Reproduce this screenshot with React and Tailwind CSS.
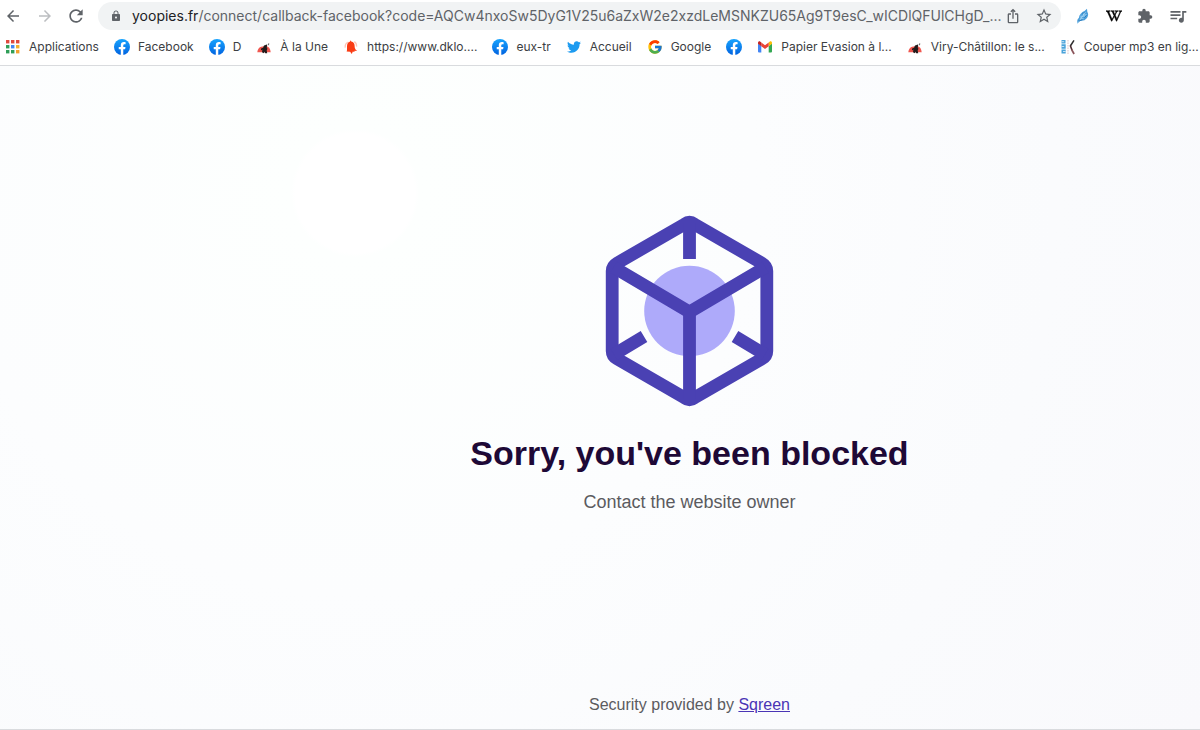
import React from "react";
import {
  MdArrowBack,
  MdArrowForward,
  MdRefresh,
  MdLock,
  MdExtension,
  MdStarBorder,
  MdOutlineIosShare,
  MdQueueMusic,
} from "react-icons/md";
import { FaTwitter, FaWikipediaW } from "react-icons/fa";
import { FcGoogle } from "react-icons/fc";

function AppsIcon() {
  const colors = [
    "#e04a3f", "#e04a3f", "#e04a3f",
    "#2f9e57", "#4285f4", "#f2b02e",
    "#2f9e57", "#2f9e57", "#f2a02e",
  ];
  return (
    <svg viewBox="0 0 16 16" className="size-4">
      {colors.map((c, i) => (
        <rect key={i} x={1 + (i % 3) * 5} y={1 + Math.floor(i / 3) * 5} width="3.4" height="3.4" fill={c} />
      ))}
    </svg>
  );
}

function FacebookIcon() {
  return (
    <svg viewBox="0 0 24 24" className="size-4">
      <defs>
        <linearGradient id="fb" x1="0" y1="0" x2="0" y2="1">
          <stop offset="0" stopColor="#18a4fe" />
          <stop offset="1" stopColor="#0163e0" />
        </linearGradient>
      </defs>
      <circle cx="12" cy="12" r="12" fill="url(#fb)" />
      <path
        fill="#fff"
        d="M16.7 15.5l.5-3.5h-3.3V9.7c0-1 .5-1.900 1.900-1.900h1.600V4.900s-1.400-.25-2.700-.25c-2.700 0-4.500 1.650-4.500 4.700V12H7.100v3.500h3.100V23.900a12.400 12.400 0 0 0 3.700 0V15.500z"
      />
    </svg>
  );
}

function NewsIcon() {
  return (
    <svg viewBox="0 0 16 16" className="size-4">
      <path d="M1.300 13.200c.3-2.600 1.500-4.800 3.700-5.400L10 7c3 .5 4.400 3 4.700 6.200z" fill="#f0574f" />
      <path d="M6 13.200l.4-2.800-1.500 1 .2-1.800 2-.8.9-2.200 1.700-.6.6-.8.9 1.300-.5 1.800.7 1.500-.7 1.700.5 2.700H9.200l-.6-1.700-.6 1.700z" fill="#1f1a1a" />
      <path d="M11.600 5.600l1.300-1.500.5 1-1 1.300z" fill="#6d6868" />
    </svg>
  );
}

function BellIcon() {
  return (
    <svg viewBox="0 0 16 16" className="size-4">
      <path d="M5.300 3C3 3.800 2 6 2.200 8.600M11.300 2.600c1.800 1 2.400 2.900 2.300 5" stroke="#ffc4b5" strokeWidth="1.300" fill="none" />
      <path
        d="M7.300 1.200l1 1.300c2.200.3 3.300 2 3.300 4.300 0 2.600.7 3.800 2.600 5.200l-2.600-.2-.3 1.200-1.500-.6-1 2.500-1.700-2.100-3.500-.2c.6-1.300.4-3 .4-5.200 0-2.400.9-4 3.100-4.800z"
        fill="#fa3c14"
      />
    </svg>
  );
}

function GmailIcon() {
  return (
    <svg viewBox="0 0 16 16" className="size-4">
      <path d="M1 4.500l3.300 2.400V13.500H2a1 1 0 0 1-1-1z" fill="#4285f4" />
      <path d="M15 4.500l-3.300 2.400v6.600H14a1 1 0 0 0 1-1z" fill="#34a853" />
      <path d="M11.700 3.600V7.300L15 4.800V3.900c0-1.300-1.400-2-2.400-1.200z" fill="#fbbc04" />
      <path d="M4.300 7.300V3.500L8 6.300l3.700-2.800v3.800L8 10z" fill="#ea4335" />
      <path d="M1 3.900v.9l3.300 2.500V3.500l-.9-.8C2.400 1.900 1 2.600 1 3.900z" fill="#c5221f" />
    </svg>
  );
}

function Mp3Icon() {
  return (
    <svg viewBox="0 0 16 16" className="size-4">
      <path d="M1.500 1h4v3.500h-4zM1.500 5.200h4.200v4.600H1.500zM1.500 10.600h4.200v4H1.500z" fill="#4aa3da" />
      <path d="M1.500 2.700h2.700M1.500 7.500h2.700M3 12.500h2.700" stroke="#e4f3fb" strokeWidth=".8" />
      <path d="M8 1v14" stroke="#d3a7ae" strokeWidth=".7" strokeDasharray="1.500 1" />
      <path d="M14 1.300L10.300 7" stroke="#2c2c2c" strokeWidth="1.500" />
      <path d="M10.300 6.500l1.700 4.500" stroke="#4b2d31" strokeWidth="1.600" />
      <path d="M11.600 10.500l2.500 4.500" stroke="#8b555b" strokeWidth="1.700" />
    </svg>
  );
}

function FeatherIcon() {
  return (
    <svg viewBox="0 0 16 16" className="size-4">
      <path d="M2.500 15.500c-.6-2.400-.3-4.500 1.300-5.500C4.300 6.500 6.600 4.200 9.500 3L12 .8l.3 3c1.200 1.800 1.200 4-.3 6.200l-2.500 2.300-4.300.7z" fill="#4c9fdb" />
      <path d="M2.500 15.500L10.500 4M5 11l3.500-.4M6.500 8.500L10.500 8M6 7.500V10M8.500 4.800v2.500l3-.8" stroke="#b5dcf5" strokeWidth=".7" fill="none" />
      <path d="M3.500 13l4-1.300M9.500 9.500l2-2M7.500 5.500l2-1" stroke="#1f6fae" strokeWidth=".8" />
    </svg>
  );
}

const bookmarks = [
  { icon: <AppsIcon />, label: "Applications" },
  { icon: <FacebookIcon />, label: "Facebook" },
  { icon: <FacebookIcon />, label: "D" },
  { icon: <NewsIcon />, label: "À la Une" },
  { icon: <BellIcon />, label: "https://www.dklo...." },
  { icon: <FacebookIcon />, label: "eux-tr" },
  { icon: <FaTwitter className="size-4 p-px text-[#1d9bf0]" />, label: "Accueil" },
  { icon: <FcGoogle className="size-4" />, label: "Google" },
  { icon: <FacebookIcon />, label: "" },
  { icon: <GmailIcon />, label: "Papier Evasion à l..." },
  { icon: <NewsIcon />, label: "Viry-Châtillon: le s..." },
  { icon: <Mp3Icon />, label: "Couper mp3 en lig..." },
];

function Toolbar() {
  return (
    <div className="flex h-8 items-center pr-3 pl-1 text-[#5f6368]">
      <button type="button" aria-label="Back" className="mr-3.5"><MdArrowBack className="size-[18px]" /></button>
      <button type="button" aria-label="Forward" className="mr-3 text-[#bcbec1]"><MdArrowForward className="size-[18px]" /></button>
      <button type="button" aria-label="Reload" className="mr-3"><MdRefresh className="size-5" /></button>
      <div className="flex h-7 min-w-0 flex-1 items-center rounded-full bg-[#f1f3f4] pr-2 pl-3">
        <MdLock className="mr-2.5 size-3 shrink-0" />
        <label htmlFor="address" className="text-sm text-[#202124]">yoopies.fr</label>
        <input
          id="address"
          type="text"
          readOnly
          value="/connect/callback-facebook?code=AQCw4nxoSw5DyG1V25u6aZxW2e2xzdLeMSNKZU65Ag9T9esC_wICDlQFUlCHgD_..."
          className="min-w-0 flex-1 bg-transparent text-sm outline-none"
        />
        <button type="button" aria-label="Share" className="ml-0.5"><MdOutlineIosShare className="size-4" /></button>
        <button type="button" aria-label="Bookmark this page" className="ml-3.5"><MdStarBorder className="size-[18px]" /></button>
      </div>
      <div className="ml-3.5 flex items-center gap-[15px]">
        <button type="button" aria-label="Feather"><FeatherIcon /></button>
        <button type="button" aria-label="Wikipedia"><FaWikipediaW className="size-4 text-black" stroke="#000" strokeWidth="22" /></button>
        <button type="button" aria-label="Extensions"><MdExtension className="size-4" /></button>
        <button type="button" aria-label="Media"><MdQueueMusic className="size-5" /></button>
      </div>
    </div>
  );
}

function CubeLogo() {
  return (
    <svg viewBox="0 0 170 192" className="h-48 w-[170px]" role="img" aria-label="Blocked">
      <circle cx="84.500" cy="96" r="45.300" fill="#aeaafa" />
      <g fill="none" stroke="#4a41b3" strokeWidth="12.800" strokeLinejoin="round">
        <path d="M79.500 9.200Q84.500 5.500 89.500 9.200L157 48.200Q161.800 51 161.800 56V136Q161.800 141 157 143.800L89.500 182.800Q84.500 186.500 79.500 182.800L12 143.800Q7.200 141 7.200 136V56Q7.200 51 12 48.200Z" />
        <path d="M8.700 52.300L84.500 97L160.300 52.300M84.500 97V184" strokeLinejoin="miter" />
        <path d="M84.500 8V44M9 139.500L39 121.500M160 139.500L130 121.500" />
      </g>
    </svg>
  );
}

export default function App() {
  return (
    <div className="flex min-h-screen flex-col overflow-hidden bg-white font-['Inter',sans-serif]">
      <header className="border-b border-[#d9dbde]">
        <Toolbar />
        <nav aria-label="Bookmarks" className="flex h-[33px] items-start gap-[15px] pl-[5px] text-xs whitespace-nowrap text-[#3c4043]">
          {bookmarks.map((b, i) => (
            <a key={i} href="#" aria-label={b.label || "Facebook"} className="flex h-[30px] shrink-0 items-center gap-2">
              {b.icon}
              {b.label && <span>{b.label}</span>}
            </a>
          ))}
        </nav>
      </header>
      <main className="flex flex-1 flex-col items-center border-b border-[#d9dbde] bg-[radial-gradient(circle_at_355px_127px,#ffffff_0,#ffffff_60px,#fdfffe_64px,#fcfdfe_400px,#fafbfd_700px,#f9f9fc_1000px)] pt-[149px] pb-3 pl-[179px] font-['Liberation_Sans',sans-serif] text-[#5b5b5f]">
        <CubeLogo />
        <h1 className="mt-6 text-[34px] leading-[44px] font-bold text-[#1e0936]">Sorry, you've been blocked</h1>
        <p className="mt-[15px] text-lg leading-6">Contact the website owner</p>
        <p className="mt-auto text-base leading-6">
          Security provided by <a href="#" className="text-[#4a35b5] underline">Sqreen</a>
        </p>
      </main>
    </div>
  );
}
